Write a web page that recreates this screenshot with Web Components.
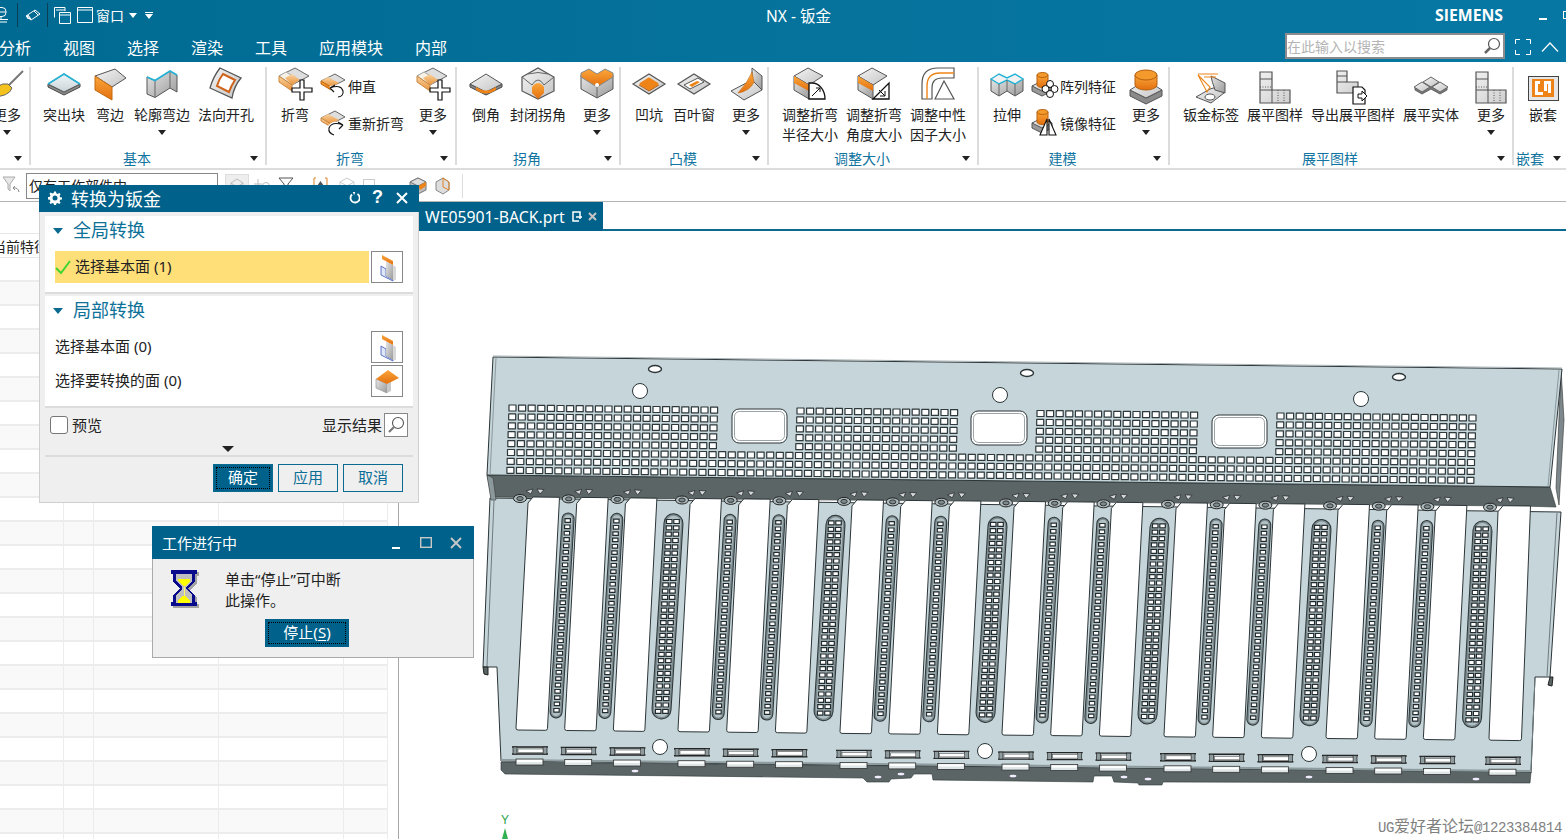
<!doctype html>
<html lang="zh">
<head>
<meta charset="utf-8">
<title>NX - 钣金</title>
<style>
  html, body { margin: 0; height: 100%; overflow: hidden; background: #fff; }
  body {
    position: relative;
    width: 1566px;
    height: 839px;
    font-family: "Noto Sans", "Noto Sans CJK SC", sans-serif;
    color: #222;
  }
</style>
</head>
<body>
<nx-topbar></nx-topbar>

<nx-ribbon>
  <nx-group label="" style="width:31px">
    <nx-tool icon="broom" drop style="width:60px;margin-left:-23px">更多</nx-tool>
  </nx-group>
  <nx-group label="基本" style="width:236px;padding-left:10px">
    <nx-tool icon="plate" style="width:46px">突出块</nx-tool>
    <nx-tool icon="flange" style="width:46px">弯边</nx-tool>
    <nx-tool icon="contour" drop style="width:58px">轮廓弯边</nx-tool>
    <nx-tool icon="cutout" style="width:70px">法向开孔</nx-tool>
  </nx-group>
  <nx-group label="折弯" style="width:190px;padding-left:6px">
    <nx-tool icon="bend" style="width:44px">折弯</nx-tool>
    <nx-stack style="width:91px;margin-left:3px">
      <nx-small icon="unbend">伸直</nx-small>
      <nx-small icon="rebend">重新折弯</nx-small>
    </nx-stack>
    <nx-tool icon="bend" drop style="width:44px">更多</nx-tool>
  </nx-group>
  <nx-group label="拐角" style="width:164px;padding-left:7px">
    <nx-tool icon="chamfer" style="width:44px">倒角</nx-tool>
    <nx-tool icon="closecorner" style="width:60px">封闭拐角</nx-tool>
    <nx-tool icon="vcorner" drop style="width:44px;margin-left:7px">更多</nx-tool>
  </nx-group>
  <nx-group label="凸模" style="width:148px;padding-left:7px">
    <nx-tool icon="dimple" style="width:42px">凹坑</nx-tool>
    <nx-tool icon="louver" style="width:48px">百叶窗</nx-tool>
    <nx-tool icon="wedge" drop style="width:44px;margin-left:6px">更多</nx-tool>
  </nx-group>
  <nx-group label="调整大小" style="width:210px;padding-left:9px">
    <nx-tool icon="radius" style="width:64px">调整折弯<br>半径大小</nx-tool>
    <nx-tool icon="angle" style="width:64px">调整折弯<br>角度大小</nx-tool>
    <nx-tool icon="neutral" style="width:64px">调整中性<br>因子大小</nx-tool>
  </nx-group>
  <nx-group label="建模" style="width:191px;padding-left:6px">
    <nx-tool icon="extrude" style="width:44px">拉伸</nx-tool>
    <nx-stack style="width:92px;margin-left:3px">
      <nx-small icon="pattern">阵列特征</nx-small>
      <nx-small icon="mirror">镜像特征</nx-small>
    </nx-stack>
    <nx-tool icon="boss" drop style="width:44px">更多</nx-tool>
  </nx-group>
  <nx-group label="展平图样" style="width:344px;padding-left:9px">
    <nx-tool icon="label" style="width:64px">钣金标签</nx-tool>
    <nx-tool icon="flat" style="width:64px">展平图样</nx-tool>
    <nx-tool icon="export" style="width:92px">导出展平图样</nx-tool>
    <nx-tool icon="solid" style="width:64px">展平实体</nx-tool>
    <nx-tool icon="flat" drop style="width:44px;margin-left:6px">更多</nx-tool>
  </nx-group>
  <nx-group label="嵌套" style="width:56px;padding-left:7px">
    <nx-tool icon="nest" style="width:44px">嵌套</nx-tool>
  </nx-group>
</nx-ribbon>

<nx-selbar></nx-selbar>

<nx-workspace>
  <nx-partlist></nx-partlist>
  <nx-viewport></nx-viewport>
</nx-workspace>

<nx-dialog heading="转换为钣金">
  <nx-section label="全局转换">
    <nx-pick icon="wall" active>选择基本面 (1)</nx-pick>
  </nx-section>
  <nx-section label="局部转换">
    <nx-pick icon="wall">选择基本面 (0)</nx-pick>
    <nx-pick icon="face" style="margin-top:2px">选择要转换的面 (0)</nx-pick>
  </nx-section>
</nx-dialog>

<nx-progress></nx-progress>

<script>
const ICONS = {
    broom: `<path d="M36 5 21 20" stroke="#777" stroke-width="2"/><path d="M4 30Q10 16 21 18L25 22Q22 31 4 31Z" fill="#f4c21c" stroke="#666"/>`,
    plate: `<path d="M4 18v3l16 8 16-8v-3l-16 8z" fill="#8d8d8d" stroke="#444"/><path d="M4 18 20 8 36 18 20 26Z" fill="url(#bl)" stroke="#555"/><path d="M4 18 20 8 36 18" fill="none" stroke="#24b3d6" stroke-width="1.6"/>`,
    flange: `<path d="M5 10 25 3 36 12 22 21Z" fill="url(#gy)" stroke="#555"/><path d="M5 10 22 21V34L5 24Z" fill="url(#og)" stroke="#c06a10"/>`,
    contour: `<path d="M5 11 13 14.500 28 5 35 9V26L28 22 13 31.500 5 28Z" fill="url(#gd)" stroke="#555"/><path d="M13 14.500V31.500M28 5V22" stroke="#666" fill="none"/><path d="M5 11 13 14.500 28 5 35 9" fill="none" stroke="#24b3d6" stroke-width="1.6"/>`,
    cutout: `<path d="M14 2 35 12Q28 20 26 32L4 22Q7 11 14 2Z" fill="url(#gy)" stroke="#555" stroke-width="1.3"/><path d="M17 8 29 14Q25 20 23 26L11 20Q13 13 17 8Z" fill="#fff" stroke="#d0631a" stroke-width="2"/>`,
    bend: `<path d="M4 10 20 2 34 10 17 19Z" fill="#dedede" stroke="#666"/><path d="M4 10 11 6 24 14 17 19Z" fill="#f7f2e8" stroke="#aaa"/><path d="M10 12 17 8 25 14 17 19Z" fill="url(#tn)"/><path d="M4 10 17 19V25L4 16Z" fill="url(#tn)" stroke="#c9883f"/><path d="M25 14h4v8h8v4h-8v8h-4v-8h-8v-4h8z" fill="#fff" stroke="#111" stroke-width="1.2"/>`,
    chamfer: `<path d="M4 18v3l16 8 16-8v-3l-16 8z" fill="#888" stroke="#444"/><path d="M4 18 20 8 36 18 20 26Z" fill="url(#gy)" stroke="#555"/><path d="M10 21Q20 28 30 21L30 24Q20 31 10 24Z" fill="#ee8418"/>`,
    closecorner: `<path d="M4 11 20 2 36 11V25L20 33 4 25Z" fill="url(#gy)" stroke="#555" stroke-width="1.2"/><path d="M4 11 14 19M36 11 26 19M10 8Q20 5 30 8M14 19Q20 9 26 19" fill="none" stroke="#666"/><path d="M14 21Q20 13 26 21V27L20 33 14 27Z" fill="url(#og)"/>`,
    vcorner: `<path d="M4 9 20 19 36 9V23L20 32 4 23Z" fill="url(#gd)" stroke="#555"/><path d="M20 20V32" stroke="#666"/><path d="M4 7 12 3 20 8 28 3 36 7V11L20 21 4 11Z" fill="url(#og)" stroke="#888"/><circle cx="20" cy="19" r="2" fill="#fff"/>`,
    dimple: `<path d="M4 18 20 8 36 18 20 28Z" fill="url(#gy)" stroke="#555" stroke-width="1.2"/><path d="M12 18 20 13 28 18 20 23Z" fill="#ee8418" stroke="#ee8418" stroke-width="3" stroke-linejoin="round"/><path d="M10 19 20 25 30 19" fill="none" stroke="#b55f0c"/>`,
    louver: `<path d="M4 18 20 8 36 18 20 28Z" fill="url(#gy)" stroke="#555" stroke-width="1.2"/><path d="M10 19 24 12 30 16 16 23Z" fill="#fff" stroke="#555"/><path d="M15 19 23 15 26 16 18 21Z" fill="#ee8418"/>`,
    wedge: `<path d="M5 25 26 14 36 24 18 34Z" fill="url(#gy)" stroke="#555"/><path d="M26 2 36 10V24L26 14Z" fill="url(#gd)" stroke="#555"/><path d="M12 27Q22 16 26 6L28 16Q24 25 12 27Z" fill="url(#og)" stroke="#c06a10" stroke-width=".6"/>`,
    radius: `<path d="M4 10 18 2 33 10 19 19Z" fill="url(#gy)" stroke="#555"/><path d="M4 10 19 19V33L4 24Z" fill="url(#gd)" stroke="#555"/><path d="M4 10 19 19V25L4 17Z" fill="url(#og)"/><path d="M19 17H22A13 16 0 0 1 35 33H19Z" fill="#fff" stroke="#111" stroke-width="1.3"/><path d="M22 30 30 22M26 22h4v4" fill="none" stroke="#111"/>`,
    angle: `<path d="M4 10 18 2 33 10 19 19Z" fill="url(#gy)" stroke="#555"/><path d="M4 10 19 19V33L4 24Z" fill="url(#gd)" stroke="#555"/><path d="M4 10 19 19V25L4 17Z" fill="url(#og)"/><path d="M19 33 35 17V33Z" fill="#fff" stroke="#111" stroke-width="1.3"/><path d="M25 24 31 30M31 25v5h-5" fill="none" stroke="#111"/>`,
    neutral: `<path d="M4 33V18Q4 2 20 2H36V12H24Q14 12 14 22V33Z" fill="#fff" stroke="#555" stroke-width="1.2"/><path d="M9 33V20Q9 7 22 7H36" fill="none" stroke="#ee8418" stroke-width="1.4"/><path d="M17 33 26 15 36 33Z" fill="#fff" stroke="#555" stroke-width="1.2"/>`,
    extrude: `<path d="M4 13V25L12 30 20 25 28 30 36 25V13Z" fill="url(#gd)" stroke="#555"/><path d="M4 13 12 8 20 12 28 8 36 13 28 18 20 14 12 18Z" fill="#f2f2f2" stroke="#24b3d6" stroke-width="1.4"/><path d="M12 18V30M28 18V30M20 14V25" stroke="#666"/>`,
    boss: `<path d="M4 24V30L20 38 36 30V24L20 32Z" fill="#8a8a8a" stroke="#555"/><path d="M4 24 20 14 36 24 20 32Z" fill="url(#gy)" stroke="#555"/><path d="M9 9V19A11 5 0 0 0 31 19V9Z" fill="url(#og)" stroke="#b55f0c"/><ellipse cx="20" cy="9" rx="11" ry="5" fill="#f49a2c" stroke="#b55f0c"/>`,
    label: `<path d="M5 31 19 23 33 19V27L20 37Z" fill="url(#gy)" stroke="#555"/><ellipse cx="19" cy="31" rx="5" ry="3" fill="#fff" stroke="#555"/><path d="M20 10 34 17V27L24 24Q21 16 20 10Z" fill="url(#gd)" stroke="#555"/><path d="M7 8H27M13 11H25M7 9 16 26 19 21 7 9" fill="none" stroke="#ee8418" stroke-width="1.1"/>`,
    flat: `<path d="M5 6H17V24H35V37H5Z" fill="url(#fl)" stroke="#555" stroke-width="1.2"/><path d="M5 13H17M5 24H17M17 24V37" stroke="#555"/><path d="M5 21H17M23 24V37M29 24V37" stroke="#555" stroke-dasharray="1 1.5"/>`,
    export: `<path d="M4 5H14V16H25V27H4Z" fill="url(#fl)" stroke="#555" stroke-width="1.2"/><path d="M4 10H14M4 16H14" stroke="#555"/><path d="M20 21h9l3 3v14H20Z" fill="#fff" stroke="#111" stroke-width="1.2"/><path d="M25 28h4v-3l5 5-5 5v-3h-4z" fill="#fff" stroke="#111"/>`,
    solid: `<path d="M4 22V24L11 28 20 23 29 28 36 24V22L20 14Z" fill="#777" stroke="#666"/><path d="M3 21 11 16 19 21 11 26Z" fill="url(#gy)" stroke="#666"/><path d="M12 16 20 11 28 16 20 21Z" fill="url(#gy)" stroke="#666"/><path d="M21 21 29 16 37 21 29 26Z" fill="url(#gy)" stroke="#666"/>`,
    nest: `<rect x="5.5" y="10.5" width="30" height="24" fill="#e6e6e6" stroke="#444"/><rect x="9" y="13" width="22" height="18" fill="#ee8418"/><path d="M12 15h5v3h-2v8h5v3h-8zM28 15h-7v10h3V18h1v9h3z" fill="#fff"/>`,
    wall: `<path d="M9 14 14 17V24L21 28V29L9 23Z" fill="#dfe6f6" stroke="#5c74c9"/><path d="M14 9 21 13V28L14 24Z" fill="url(#gd)"/><path d="M10 3 21 9V13L10 7Z" fill="url(#og)"/><path d="M21 13 24 15V28L21 28Z" fill="#d8d8d8"/>`,
    face: `<path d="M4 13 15 18V27L4 22Z" fill="url(#gd)" stroke="#999" stroke-width=".7"/><path d="M15 18 19 16V25L15 27Z" fill="#c8c8c8"/><path d="M4 13 16 4 27 12 15 18Z" fill="url(#og)"/>`
};

const SMALL_ICONS = {
    unbend: `<path d="M1 8 15 1 25 7 11 14Z" fill="#dedede" stroke="#666"/><path d="M1 8 8 4 19 10 11 14Z" fill="url(#tn)"/><path d="M1 8 11 14V17L1 11Z" fill="url(#og)" stroke="#c06a10"/><path d="M10 15Q21 11 23 18Q24 23 18 24" fill="none" stroke="#fff" stroke-width="3.5"/><path d="M10 15Q21 11 23 18Q24 23 18 24M10 15l5-3M10 15l4 4" fill="none" stroke="#111" stroke-width="1.1"/>`,
    rebend: `<path d="M1 8 15 1 25 7 11 14Z" fill="#dedede" stroke="#666"/><path d="M1 8 8 4 19 10 11 14Z" fill="url(#tn)"/><path d="M1 8 11 14V17L1 11Z" fill="url(#tn)" stroke="#c9883f"/><path d="M23 15Q12 11 9 18Q8 23 14 25" fill="none" stroke="#fff" stroke-width="3.5"/><path d="M23 15Q12 11 9 18Q8 23 14 25M23 15l-5-3M23 15l-4 4" fill="none" stroke="#111" stroke-width="1.1"/>`,
    pattern: `<path d="M0 13V18L10 23 20 18V13Z" fill="#9a9a9a" stroke="#555"/><path d="M0 13 10 8 20 13 10 18Z" fill="url(#gy)" stroke="#555"/><path d="M5 2V12A5.5 2.5 0 0 0 16 12V2Z" fill="url(#og)" stroke="#b55f0c"/><ellipse cx="10.5" cy="2" rx="5.5" ry="2.5" fill="#f49a2c" stroke="#b55f0c"/><g fill="#fff" stroke="#111"><circle cx="18" cy="11" r="3.5"/><circle cx="13.5" cy="16" r="3.5"/><circle cx="22.5" cy="16" r="3.5"/><circle cx="18" cy="21" r="3.5"/></g>`,
    mirror: `<path d="M0 13V18L10 23 20 18V13Z" fill="#9a9a9a" stroke="#555"/><path d="M0 13 10 8 20 13 10 18Z" fill="url(#gy)" stroke="#555"/><path d="M5 2V12A5.5 2.5 0 0 0 16 12V2Z" fill="url(#og)" stroke="#b55f0c"/><ellipse cx="10.5" cy="2" rx="5.5" ry="2.5" fill="#f49a2c" stroke="#b55f0c"/><path d="M15 9 8 25H15ZM17 9 24 25H17Z" fill="#fff" stroke="#111" stroke-width="1.1"/>`
};

const GRADIENTS = `<defs>
  <linearGradient id="og" x1="0" y1="0" x2="0" y2="1"><stop offset="0" stop-color="#fba63c"/><stop offset="1" stop-color="#e26f0d"/></linearGradient>
  <linearGradient id="tn" x1="0" y1="0" x2="0" y2="1"><stop offset="0" stop-color="#f8d3a2"/><stop offset="1" stop-color="#ea9238"/></linearGradient>
  <linearGradient id="gy" x1="0" y1="0" x2="1" y2="1"><stop offset="0" stop-color="#f4f4f4"/><stop offset="1" stop-color="#c4c4c4"/></linearGradient>
  <linearGradient id="gd" x1="0" y1="0" x2="1" y2="1"><stop offset="0" stop-color="#e6e6e6"/><stop offset="1" stop-color="#9a9a9a"/></linearGradient>
  <linearGradient id="fl" x1="0" y1="0" x2="1" y2="1"><stop offset="0" stop-color="#efefef"/><stop offset="1" stop-color="#cfcfcf"/></linearGradient>
  <linearGradient id="bl" x1="0" y1="0" x2="0" y2="1"><stop offset="0" stop-color="#f0f6f8"/><stop offset="1" stop-color="#c9d3d8"/></linearGradient>
</defs>`;

const makeElement = (name, html) => {
    const template = document.createElement('template');
    template.innerHTML = html;
    customElements.define(name, class extends HTMLElement {
        constructor() {
            super();
            this.attachShadow({ mode: 'open' });
            this.shadowRoot.appendChild(template.content.cloneNode(true));
        }
    });
};

class NxIcon extends HTMLElement {
    connectedCallback() {
        const w = this.getAttribute('w') || 40;
        const h = this.getAttribute('h') || 36;
        const name = this.getAttribute('name');
        this.attachShadow({ mode: 'open' }).innerHTML = `
            <style>:host { display: block; width: ${w}px; height: ${h}px; flex: none; } svg { display: block; overflow: visible; }</style>
            <svg width="${w}" height="${h}" viewBox="0 0 ${w} ${h}">${GRADIENTS}${ICONS[name] || SMALL_ICONS[name]}</svg>`;
    }
}
customElements.define('nx-icon', NxIcon);

makeElement('nx-ribbon', `
<style>
  :host { display: flex; height: 108px; box-sizing: border-box; border-bottom: 2px solid #dcdcdc; background: #fff; overflow: hidden; }
</style>
<slot></slot>`);

class NxGroup extends HTMLElement {
    constructor() {
        super();
        this.attachShadow({ mode: 'open' }).innerHTML = `
        <style>
          :host { display: flex; flex-direction: column; flex: none; box-sizing: border-box; height: 98px; margin-top: 5px; border-right: 2px solid #dcdcdc; }
          .tools { display: flex; height: 84px; margin-top: -1px; }
          .foot { display: flex; height: 15px; font-size: 14px; line-height: 15px; color: #11759f; }
          .name { flex: 1; text-align: center; white-space: nowrap; padding-top: 1px; }
          .arrow { width: 22px; flex: none; display: flex; justify-content: center; padding-top: 6px; box-sizing: border-box; }
          .arrow i { width: 0; height: 0; border: 4px solid transparent; border-top: 5px solid #222; border-bottom: 0; }
        </style>
        <div class="tools"><slot></slot></div>
        <div class="foot"><span class="name">${this.getAttribute('label')}</span><span class="arrow"><i></i></span></div>`;
    }
    connectedCallback() {
        // the footer is centred over the whole group, so cancel the group's left padding
        const pad = parseInt(this.style.paddingLeft) || 0;
        this.shadowRoot.querySelector('.foot').style.marginLeft = -pad + 'px';
    }
}
customElements.define('nx-group', NxGroup);

class NxTool extends HTMLElement {
    connectedCallback() {
        const drop = this.hasAttribute('drop');
        this.attachShadow({ mode: 'open' }).innerHTML = `
        <style>
          :host { display: flex; flex-direction: column; align-items: center; flex: none; font-size: 14px; line-height: 20px; color: #222; text-align: center; }
          .lb { margin-top: 3px; white-space: nowrap; }
          i { margin-top: 5px; width: 0; height: 0; border: 4px solid transparent; border-top: 5px solid #222; border-bottom: 0; }
        </style>
        <nx-icon name="${this.getAttribute('icon')}"></nx-icon>
        <div class="lb"><slot></slot></div>
        ${drop ? '<i></i>' : ''}`;
    }
}
customElements.define('nx-tool', NxTool);

makeElement('nx-stack', `
<style>:host { display: flex; flex-direction: column; flex: none; padding-top: 1px; }</style>
<slot></slot>`);

class NxSmall extends HTMLElement {
    connectedCallback() {
        this.attachShadow({ mode: 'open' }).innerHTML = `
        <style>
          :host { display: flex; align-items: center; gap: 2px; height: 37px; font-size: 14px; white-space: nowrap; color: #222; }
        </style>
        <nx-icon name="${this.getAttribute('icon')}" w="26" h="26"></nx-icon>
        <span><slot></slot></span>`;
    }
}
customElements.define('nx-small', NxSmall);

makeElement('nx-topbar', `
<style>
  :host { display: block; height: 62px; background: linear-gradient(90deg, #006a92, #05729b 45%, #0677a3); color: #fff; overflow: hidden; }
  .row1 { display: flex; align-items: center; box-sizing: border-box; height: 31px; padding-bottom: 1px; font-size: 14px; }
  .quick { display: flex; align-items: center; width: 766px; flex: none; }
  .sep { width: 1px; height: 24px; background: #0b3f55; margin: 0 6px; }
  .quick svg { display: block; flex: none; }
  .title { font-size: 15.500px; width: 669px; flex: none; }
  .siemens { font-weight: 700; font-size: 15.800px; width: 104px; flex: none; font-family: "Open Sans", "Noto Sans", sans-serif; }
  .row2 { display: flex; align-items: center; height: 31px; }
  .menu { display: flex; gap: 32px; font-size: 16px; margin-left: -1px; width: 1286px; flex: none; }
  .search { box-sizing: border-box; width: 220px; height: 26px; margin-top: -1px; background: #fff; border: 2px solid #8c8c8c; display: flex; align-items: center; justify-content: space-between; color: #b4b4b4; font-size: 14px; padding-right: 2px; }
  .search svg, .win { display: block; flex: none; }
</style>
<div class="row1">
  <div class="quick">
    <svg width="9" height="16" viewBox="0 0 9 16" fill="none" stroke="#fff"><rect x="-4" y=".5" width="10" height="9" rx="4"/><path d="M1 10V12M-3 12.500H8M-1 15H7M-3 5H6"/></svg>
    <span class="sep" style="margin-left:8px"></span>
    <svg width="16" height="14" viewBox="0 0 16 14" style="margin-left:1px" stroke="#fff" fill="none"><path d="M1 8 10 2 15 6 6 12Z"/><path d="M3 7 6 11 2 10Z" fill="#b8d3de"/><path d="M9 3 13 7" /></svg>
    <span class="sep"></span>
    <svg width="17" height="17" viewBox="0 0 17 17" style="margin-left:0" fill="none" stroke="#fff"><path d="M.5 10.500V.5H11V4M2 3H11"/><path d="M5.500 5.500H16.500V16.500H5.500ZM5.500 8H16.500" fill="#05719a"/></svg>
    <svg width="16" height="16" viewBox="0 0 16 16" style="margin-left:6px" fill="none" stroke="#fff"><path d="M.5 .5H15.500V15.500H.5ZM.5 3H15.500"/></svg>
    <span style="margin-left:3px">窗口</span>
    <svg width="8" height="5" viewBox="0 0 8 5" style="margin-left:5px"><path d="M0 0H8L4 5Z" fill="#fff"/></svg>
    <svg width="8" height="7" viewBox="0 0 8 7" style="margin-left:8px"><path d="M0 0H8V1H0ZM0 2H8L4 7Z" fill="#fff"/></svg>
  </div>
  <div class="title">NX - 钣金</div>
  <div class="siemens">SIEMENS</div>
  <svg class="win" width="8" height="3" viewBox="0 0 8 3" style="margin-top:8px"><rect width="8" height="2" fill="#fff"/></svg>
  <svg class="win" width="8" height="8" viewBox="0 0 8 8" style="margin-left:16px" fill="none" stroke="#fff"><rect x=".5" y=".5" width="8" height="7"/></svg>
</div>
<div class="row2">
  <div class="menu"><span>分析</span><span>视图</span><span>选择</span><span>渲染</span><span>工具</span><span>应用模块</span><span>内部</span></div>
  <div class="search">
    <span>在此输入以搜索</span>
    <svg width="18" height="18" viewBox="0 0 18 18" fill="none"><circle cx="11" cy="7" r="5.500" stroke="#555" stroke-width="1.200" fill="#fff"/><path d="M7 11 2 16" stroke="#666" stroke-width="2.500"/></svg>
  </div>
  <svg width="16" height="16" viewBox="0 0 16 16" style="margin-left:10px;flex:none" fill="none" stroke="#fff"><path d="M.5 5V.5H5M11 .5H15.500V5M15.500 11V15.500H11M5 15.500H.5V11"/></svg>
  <svg width="18" height="10" viewBox="0 0 18 10" style="margin-left:10px;flex:none" fill="none" stroke="#fff" stroke-width="1.200"><path d="M1 9.500 9 1 17 9.500"/></svg>
</div>`);

makeElement('nx-selbar', `
<style>
  :host { display: flex; align-items: center; box-sizing: border-box; height: 32px; background: #fff; border-bottom: 1px solid #b4b4b4; }
  svg { display: block; flex: none; }
  .combo { box-sizing: border-box; width: 192px; height: 26px; margin-left: 6px; border: 1px solid #888; font-size: 14px; line-height: 24px; padding-left: 2px; white-space: nowrap; }
  .sep { width: 1px; height: 24px; background: #ddd; margin-left: 12px; }
  .dash { width: 6px; height: 2px; background: #444; flex: none; }
</style>
<svg width="18" height="20" viewBox="0 0 18 20" style="margin-left:2px" fill="none" stroke="#aaa"><path d="M1 1H13L8 8V15L6 13V8Z" fill="#e8e8e8"/><path d="M17 16Q16 11 11 12M11 12l2-2M11 12l2 2" stroke="#888"/></svg>
<div class="combo">仅有工作部件中</div>
<svg width="22" height="22" viewBox="0 0 22 22" style="margin-left:8px;background:#eee;outline:1px solid #ddd" fill="none" stroke="#bbb"><path d="M5 8 11 4 17 8V15L11 19 5 15ZM5 8 11 12 17 8M11 12V19"/></svg>
<svg width="20" height="18" viewBox="0 0 20 18" style="margin-left:4px" fill="none" stroke="#bbb"><path d="M6 2V16M2 7H10M2 11H10"/><circle cx="14" cy="9" r="3.500"/></svg>
<svg width="16" height="18" viewBox="0 0 16 18" style="margin-left:6px" fill="none" stroke="#555"><path d="M1 1H15L10 7V12H6V7Z"/><rect x="3" y="12" width="10" height="5"/></svg>
<span class="dash" style="margin-left:5px"></span>
<svg width="15" height="18" viewBox="0 0 15 18" style="margin-left:8px" fill="none"><path d="M3 1H1V16H3M12 1H14V16H12" stroke="#e38124"/><path d="M7.500 4 11 9 7.500 14 4 9Z" fill="#555"/></svg>
<svg width="16" height="18" viewBox="0 0 16 18" style="margin-left:11px" fill="none" stroke="#ccc"><path d="M1 5 8 1 15 5V13L8 17 1 13ZM1 5 8 9 15 5M8 9V17"/></svg>
<svg width="12" height="14" viewBox="0 0 12 14" style="margin-left:8px" fill="none" stroke="#ccc"><rect x=".5" y=".5" width="11" height="13"/></svg>
<span class="dash" style="margin-left:13px"></span>
<svg width="18" height="18" viewBox="0 0 18 18" style="margin-left:15px" fill="#bbb" stroke="#777"><path d="M1 5 9 1 17 5V13L9 17 1 13Z"/><path d="M1 5 9 9 17 5 9 1Z" fill="#ddd"/><path d="M9 9 17 5V9L11 13Z" fill="#ee8418" stroke="none"/></svg>
<svg width="15" height="18" viewBox="0 0 15 18" style="margin-left:8px" fill="#ddd" stroke="#888"><path d="M1 5 8 1 14 5V13L8 17 1 13Z"/><path d="M8 1V10L14 13V5Z" fill="none" stroke="#e38124"/></svg>
<span class="sep"></span>`);

makeElement('nx-workspace', `
<style>:host { display: flex; height: 637px; overflow: hidden; }</style>
<slot></slot>`);

class NxPartlist extends HTMLElement {
    constructor() {
        super();
        let rows = '';
        for (let i = 0; i < 25; i++) {
            rows += `<div class="row${i % 2 ? ' odd' : ''}"><i style="width:64px"></i><i style="width:30px"></i><i style="width:125px"></i><i style="width:125px"></i><i style="width:44px"></i></div>`;
        }
        this.attachShadow({ mode: 'open' }).innerHTML = `
        <style>
          :host { display: block; flex: none; box-sizing: border-box; width: 399px; border-right: 1px solid #a8a8a8; background: #fff; overflow: hidden; }
          .head { box-sizing: border-box; margin-top: 31px; height: 25px; width: 388px; border-top: 1px solid #e6e6e6; border-bottom: 1px solid #e6e6e6; font-size: 14px; line-height: 25px; white-space: nowrap; text-indent: -8px; }
          .row { display: flex; box-sizing: border-box; width: 388px; height: 24px; border-bottom: 2px solid #ececec; }
          .odd { background: #f9f9f9; }
          .row i { display: block; box-sizing: border-box; flex: none; border-right: 1px solid #ececec; }
        </style>
        <div class="head">当前特征</div>${rows}`;
    }
}
customElements.define('nx-partlist', NxPartlist);

class NxViewport extends HTMLElement {
    constructor() {
        super();
        this.attachShadow({ mode: 'open' }).innerHTML = `
        <style>
          :host { display: block; flex: 1; min-width: 0; background: #fff; }
          .tabs { box-sizing: border-box; height: 29px; border-bottom: 2px solid #0b6a90; padding-left: 20px; display: flex; }
          .tab { box-sizing: border-box; width: 184px; height: 29px; background: #00628a; color: #fff; font-size: 15.800px; line-height: 28px; padding-left: 6px; display: flex; align-items: center; white-space: nowrap; }
          svg.ic { flex: none; display: block; }
          svg.view { display: block; }
        </style>
        <div class="tabs"><div class="tab"><span>WE05901-BACK.prt</span>
          <svg class="ic" width="10" height="11" viewBox="0 0 10 11" style="margin-left:7px" fill="none" stroke="#fff" stroke-width="1.500"><path d="M8 4V1H1V10H7"/><path d="M4 6H10M8 4V8" /></svg>
          <svg class="ic" width="9" height="9" viewBox="0 0 9 9" style="margin-left:6px" stroke="#c4c4c4" stroke-width="2"><path d="M1 1 8 8M8 1 1 8"/></svg>
        </div></div>
        ${this.sheet()}`;
    }

    sheet() {
        const xt = i => i === 18 ? 1498 : 528 + 162 * Math.floor(i / 3) + 48.7 * (i % 3);
        const xb = i => i === 18 ? 1489 : 516 + 162 * Math.floor(i / 3) + 48.7 * (i % 3);
        const yt = x => 497 + (x - 528) * 0.009;
        const yb = x => 730 + (x - 516) * 0.0105;
        const f = n => n.toFixed(1);
        const W = 31.5;
        let holes = '';
        let slots = '';
        let windows = '';
        let bumps = '';
        let tabs = '';

        // perforation on the upper face, the three cut-out windows leave gaps in rows 0-4
        const blocks = [[0, 21], [30, 46], [55, 71], [80, 100]];
        for (let r = 0; r < 8; r++) {
            for (let c = 0; c <= 100; c++) {
                if (r < 5 && !blocks.some(b => c >= b[0] && c <= b[1])) continue;
                const x = 509 + c * 9.6 - r * 0.3;
                const y = 405 + r * 8.9 + c * 0.1;
                holes += `M${f(x)} ${f(y)}h7v6h-7z`;
            }
        }

        for (let i = 0; i < 19; i++) {
            const a = xt(i);
            const b = xb(i);
            const t = yt(a);
            const e = yb(b);
            const w = i === 18 ? W + 1 : W;
            windows += `<path d="M${f(a)} ${f(t + 6)}L${f(a + 5)} ${f(t)}L${f(a + w)} ${f(t + .3)}L${f(b + w)} ${f(yb(b + w) - 2)}Q${f(b + w)} ${f(yb(b + w))} ${f(b + w - 2)} ${f(yb(b + w))}L${f(b + 2)} ${f(e)}Q${f(b)} ${f(e)} ${f(b)} ${f(e - 2)}Z"/>`;
            bumps += `<ellipse cx="${f(a - 8)}" cy="${f(t + 1.500)}" rx="6.500" ry="4" fill="#aebbbf" stroke="#222"/><ellipse cx="${f(a - 8)}" cy="${f(t + 1.500)}" rx="3.200" ry="2" fill="#7d8a8e" stroke="#333"/>`;
            bumps += `<path d="M${f(a - 2)} ${f(t - 6)}l7-2-2 5zM${f(a + 9)} ${f(t - 8)}l7 .5-4 4.500z" fill="#d6dcde" stroke="#222" stroke-width=".7"/>`;
            const by = 747 + (b - 516) * 0.0105;
            tabs += `<path d="M${f(b - 4)} ${f(by)}h36M${f(b - 4)} ${f(by + 7)}h36" stroke="#222" stroke-width="1.400"/><rect x="${f(b - 3)}" y="${f(by)}" width="4" height="7" fill="#8f9c9f" stroke="#222" stroke-width=".7"/><rect x="${f(b + 27)}" y="${f(by)}" width="4" height="7" fill="#8f9c9f" stroke="#222" stroke-width=".7"/><rect x="${f(b + 2)}" y="${f(by + 2)}" width="25" height="3.500" fill="#fff" stroke="#555" stroke-width=".6"/>`;
            tabs += `<rect x="${f(b)}" y="${f(by + 12)}" width="27" height="6" fill="#dfe6e7" stroke="#333" stroke-width=".8"/><rect x="${f(b + 1)}" y="${f(by + 13)}" width="25" height="2" fill="#fff"/>`;

            if (i === 18) continue;
            const topX = (a + W + xt(i + 1)) / 2;
            const botX = (b + W + xb(i + 1)) / 2;
            const wide = i % 3 === 2;
            const tY = yt(topX) + 16;
            const bY = yb(botX) - 13;
            const half = wide ? 9 : 5.5;
            const axis = `M${f(topX)} ${f(tY + half)}L${f(botX)} ${f(bY - half)}`;
            slots += `<path d="${axis}" stroke="#2c3538" stroke-width="${half * 2 + 2}" stroke-linecap="round"/><path d="${axis}" stroke="#7b898d" stroke-width="${half * 2}" stroke-linecap="round"/><path d="${axis}" stroke="#b0c0c4" stroke-width="${half * 2 - 3}" stroke-linecap="round"/>`;
            const n = Math.floor((bY - tY - 8) / 6.2);
            let cells = '';
            for (let k = 0; k < n; k++) {
                const p = (k + 0.5) / n;
                const cx = topX + (botX - topX) * (4 / (bY - tY) + p * (1 - 8 / (bY - tY)));
                const cy = tY + 4 + (bY - tY - 8) * p;
                if (wide) {
                    cells += `M${f(cx - 6.500)} ${f(cy - 2)}h5.500v4h-5.500zM${f(cx + .8)} ${f(cy - 2)}h5.500v4h-5.500z`;
                } else {
                    cells += `M${f(cx - 2.700)} ${f(cy - 1.800)}h5.400v3.600h-5.400z`;
                }
            }
            slots += `<path d="${cells}" fill="#fff" stroke="#222b2e" stroke-width="1.200"/>`;
        }

        const circle = (x, y) => `<circle cx="${x}" cy="${y}" r="7.500" fill="#fff" stroke="#2c3538"/>`;
        const oval = (x, y) => `<ellipse cx="${x}" cy="${y}" rx="6.500" ry="3.500" fill="#fff" stroke="#2c3538" stroke-width="1.400"/>`;
        const tinyOval = ([x, y]) => `<ellipse cx="${x}" cy="${y}" rx="3.800" ry="1.800" fill="#eef" stroke="#333" stroke-width=".5"/>`;
        const cut = (x1, y1, x2, y2) => `<rect x="${x1}" y="${y1}" width="${x2 - x1}" height="${y2 - y1}" rx="7" fill="#fff" stroke="#2c3538"/><rect x="${x1 + 2.500}" y="${y1 + 2.500}" width="${x2 - x1 - 5}" height="${y2 - y1 - 5}" rx="5" fill="#fff" stroke="#9aa5a8"/>`;

        return `<svg class="view" width="1167" height="608" viewBox="399 231 1167 608" fill="none">
          <path d="M490 498 1561 512 1550 677 1535 677 1531 773 501 761 497 667 483 667Z" fill="#c5d5d9" stroke="#2c3538" stroke-linejoin="round"/>
          <path d="M483 667H488V675L484 674ZM1550 677 1553 677 1552 686 1548 685Z" fill="#5b6565" stroke="#222"/>
          <path d="M494 500 487 666M1557 513 1547 676M1535 678 1531 770" stroke="#6f7c80"/>
          ${slots}
          <path d="M501 762 1531 772 1530 783 1163 782 1162 785 1139 785 1138 783 1114 782 1112 776 1094 776 1093 782 933 780 932 774 914 774 911 778 891 779 889 782 867 782 863 778 505 774 501 770Z" fill="#5b6565" stroke="#2c3538" stroke-width=".6"/>
          <path d="M501 760 1531 771" stroke="#8e9c9f" stroke-width="2"/>
          ${[[635, 771], [878, 777], [901, 774], [1013, 776], [1124, 777], [1148, 779], [1309, 777], [1476, 779]].map(tinyOval).join('')}
          ${tabs}
          ${circle(660, 747)}${circle(985, 751)}${circle(1309, 754)}
          <path d="M487 475 1550 487 1556 507 1520 506 491 497Z" fill="#5b6565" stroke="#2c3538" stroke-width=".6"/>
          <path d="M1561 369 1564 420 1559 505 1556 488Z" fill="#7c888b" stroke="#333" stroke-width=".6"/>
          <path d="M487 475 493 478 496 500 491 500Z" fill="#8c999c" stroke="#333" stroke-width=".5"/>
          <g fill="#fff" stroke="#2c3538" stroke-linejoin="round">${windows}</g>
          ${bumps}
          <path d="M493 357 1562 369 1550 487 487 475Z" fill="#c5d5d9" stroke="#2c3538" stroke-linejoin="round"/>
          <path d="M496 358 490 475M1559 370 1548 486" stroke="#8c9a9e"/>
          <path d="M493 356 1562 368" stroke="#a6b0b3"/>
          <path d="${holes}" fill="#fff" stroke="#2f383b" stroke-width="1.200" stroke-linejoin="round"/>
          ${cut(732, 409, 787, 443)}${cut(971, 411, 1027, 445)}${cut(1212, 415, 1267, 448)}
          ${circle(640, 391)}${circle(1000, 395)}${circle(1361, 399)}
          ${oval(655, 369)}${oval(1027, 373)}${oval(1399, 377)}
          <text x="505" y="824" text-anchor="middle" font-size="12" fill="#2aa24a" font-family="Liberation Sans, sans-serif">Y</text>
          <path d="M505 828 508 839H502Z" fill="#2fb24f"/>
          <text x="1378" y="832" font-size="14" letter-spacing="-.4" fill="#808080" font-family="Liberation Mono, Noto Sans CJK SC, monospace">UG<tspan font-size="16" letter-spacing="0">爱好者论坛</tspan>@1223384814</text>
        </svg>`;
    }
}
customElements.define('nx-viewport', NxViewport);

class NxDialog extends HTMLElement {
    constructor() {
        super();
        this.attachShadow({ mode: 'open' }).innerHTML = `
        <style>
          :host { display: block; position: absolute; left: 39px; top: 185px; box-sizing: border-box; width: 380px; height: 318px; background: #efefef; border: 1px solid #cfcfcf; border-top: 0; font-size: 15px; }
          .title { display: flex; align-items: center; box-sizing: border-box; height: 27px; padding-bottom: 2px; margin: 0 -1px; background: #00628a; color: #fff; font-size: 18px; padding-left: 9px; }
          .title svg { display: block; flex: none; }
          .body { padding: 4px 5px 0; }
          .foot { display: flex; align-items: center; height: 24px; margin-top: 5px; padding: 0 10px; }
          .check { box-sizing: border-box; width: 18px; height: 18px; border: 1px solid #777; border-radius: 3px; background: #fff; }
          .foot span { margin-left: 4px; position: relative; top: -1px; }
          .foot .spacer { flex: 1; margin: 0; }
          .look { box-sizing: border-box; width: 24px; height: 24px; border: 1px solid #888; background: #fff; margin-left: 2px; display: flex; align-items: center; justify-content: center; }
          .more { height: 18px; display: flex; justify-content: center; padding-top: 9px; box-sizing: border-box; margin-left: -3px; }
          .more i { width: 0; height: 0; border: 6px solid transparent; border-top: 6px solid #222; border-bottom: 0; }
          .btns { border-top: 2px solid #dcdcdc; margin: 0 5px; display: flex; justify-content: flex-end; gap: 5px; padding: 7px 10px 0 0; }
          .btn { box-sizing: border-box; width: 60px; height: 28px; border: 1.500px solid #0b6a90; font-size: 15px; line-height: 25px; text-align: center; color: #0b6e96; }
          .btn.on { background: #00628a; color: #fff; outline: 1px dotted #000; outline-offset: -4px; }
        </style>
        <div class="title">
          <svg width="14" height="14" viewBox="0 0 14 14"><path d="M6 0h2l.4 2 1.500.6 1.700-1.100 1.400 1.400-1.100 1.700.6 1.500 2 .4v2l-2 .4-.6 1.500 1.100 1.700-1.400 1.400-1.700-1.100-1.500.6-.4 2H6l-.4-2-1.500-.6-1.700 1.100-1.400-1.400 1.100-1.700-.6-1.500-2-.4V6l2-.4.6-1.500L1 2.400 2.400 1l1.700 1.100 1.500-.6z" fill="#fff" transform="translate(0.500 0.500) scale(.93)"/><circle cx="7" cy="7" r="2.500" fill="#00628a"/></svg>
          <span style="margin-left:9px;width:277px;flex:none">${this.getAttribute('heading')}</span>
          <svg width="12" height="12" viewBox="0 0 12 12" fill="none" stroke="#fff" stroke-width="1.800"><path d="M4 2.500A4.600 4.600 0 1 0 9.500 2"/><path d="M9.500 .5 7 0 7 3.500Z" fill="#fff" stroke="none" transform="rotate(-20 6 6)"/></svg>
          <span style="margin-left:12px;width:24px;flex:none;font-size:18px;font-weight:700;font-family:'Liberation Sans',sans-serif">?</span>
          <svg width="12" height="12" viewBox="0 0 12 12" stroke="#fff" stroke-width="2"><path d="M1 1 11 11M11 1 1 11"/></svg>
        </div>
        <div class="body"><slot></slot></div>
        <div class="foot">
          <i class="check"></i><span>预览</span><span class="spacer"></span><span>显示结果</span>
          <div class="look"><svg width="20" height="20" viewBox="0 0 20 20" fill="none"><circle cx="12" cy="8" r="5.500" stroke="#555" stroke-width="1.100"/><path d="M8 12 3 17" stroke="#777" stroke-width="2.200"/></svg></div>
        </div>
        <div class="more"><i></i></div>
        <div class="btns"><div class="btn on">确定</div><div class="btn">应用</div><div class="btn">取消</div></div>`;
    }
}
customElements.define('nx-dialog', NxDialog);

class NxSection extends HTMLElement {
    constructor() {
        super();
        this.attachShadow({ mode: 'open' }).innerHTML = `
        <style>
          :host { display: block; background: #fff; border-bottom: 2px solid #dcdcdc; margin-bottom: 2px; padding: 5px 10px 9px; }
          .h { display: flex; align-items: center; height: 25px; line-height: 25px; margin-top: -3px; margin-bottom: 8px; font-size: 18px; color: #0d7198; }
          .h i { width: 0; height: 0; margin: 0 10px 0 -2px; border: 5.500px solid transparent; border-top: 6px solid #0b6a90; border-bottom: 0; }
        </style>
        <div class="h"><i></i>${this.getAttribute('label')}</div>
        <slot></slot>`;
    }
}
customElements.define('nx-section', NxSection);

class NxPick extends HTMLElement {
    connectedCallback() {
        const on = this.hasAttribute('active');
        this.attachShadow({ mode: 'open' }).innerHTML = `
        <style>
          :host { display: flex; align-items: center; height: 32px; font-size: 15px; color: #222; }
          .t { flex: 1; height: 32px; display: flex; align-items: center; margin-right: 2px; background: ${on ? '#ffdf78' : 'transparent'}; }
          .t span { margin-top: -3px; }
          .b { box-sizing: border-box; width: 32px; height: 32px; border: 1px solid #888; background: #fff; flex: none; overflow: hidden; }
          svg { flex: none; margin-right: 3px; }
        </style>
        <div class="t">
          ${on ? '<svg width="17" height="15" viewBox="0 0 17 15" fill="none" stroke="#3fd52f" stroke-width="2"><path d="M1 8 6 13 15 1"/></svg>' : ''}
          <span><slot></slot></span>
        </div>
        <div class="b"><nx-icon name="${this.getAttribute('icon')}" w="30" h="30"></nx-icon></div>`;
    }
}
customElements.define('nx-pick', NxPick);

makeElement('nx-progress', `
<style>
  :host { display: block; position: absolute; left: 152px; top: 526px; box-sizing: border-box; width: 322px; height: 132px; background: #efefef; border: 1px solid #aaa; border-top: 0; font-size: 15px; }
  .title { display: flex; align-items: center; height: 33px; margin: 0 -1px; background: #00628a; color: #fff; font-size: 15px; padding-left: 10px; }
  .title span { width: 230px; flex: none; }
  .title svg { display: block; flex: none; }
  .body { padding: 10px 0 0 18px; }
  .top { display: flex; height: 42px; }
  .top svg { display: block; flex: none; margin-top: 1px; }
  .msg { margin-left: 25px; line-height: 21px; white-space: nowrap; }
  .stop { box-sizing: border-box; width: 84px; height: 28px; margin: 8px 0 0 94px; background: #00628a; color: #fff; font-size: 15px; line-height: 27px; text-align: center; outline: 1px dotted #000; outline-offset: -4px; }
  u { text-underline-offset: 2px; }
</style>
<div class="title">
  <span>工作进行中</span>
  <svg width="8" height="12" viewBox="0 0 8 12"><rect y="10" width="8" height="2" fill="#fff"/></svg>
  <svg width="12" height="11" viewBox="0 0 12 11" style="margin-left:20px" fill="none" stroke="#c8c8c8" stroke-width="1.400"><rect x=".7" y=".7" width="10.600" height="9.600"/></svg>
  <svg width="12" height="12" viewBox="0 0 12 12" style="margin-left:18px" stroke="#c8c8c8" stroke-width="1.800"><path d="M1 1 11 11M11 1 1 11"/></svg>
</div>
<div class="body">
  <div class="top">
    <svg width="29" height="39" viewBox="0 0 29 39" shape-rendering="crispEdges">
      <path d="M2 2H28V6H26V14L19 20 26 28V34H28V38H2V34H4V28L11 20 4 14V6H2Z" fill="#a3a3a3"/>
      <path d="M0 0H26V4H24V12L17 18 24 26V32H26V36H0V32H2V26L9 18 2 12V4H0Z" fill="#0a0a8c"/>
      <path d="M5 4H21V11L15 17V19L21 25V33H5V25L11 19V17L5 11Z" fill="#c0c0c0"/>
      <path d="M7 9H19V11L14 16H12L7 11ZM12 26H14L19 30V33H7V30Z" fill="#ffff00"/>
      <path d="M12.500 17H13.500V26H12.500Z" fill="#ffff66"/>
    </svg>
    <div class="msg">单击“停止”可中断<br>此操作。</div>
  </div>
  <div class="stop">停止(<u>S</u>)</div>
</div>`);
</script>
</body>
</html>
